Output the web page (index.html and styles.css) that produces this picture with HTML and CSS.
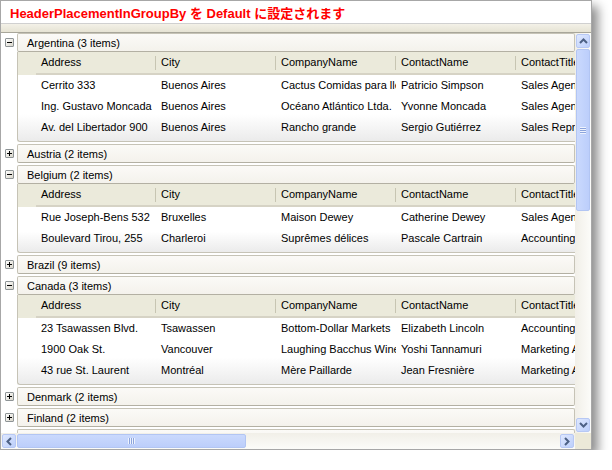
FILE: index.html
```html
<!DOCTYPE html>
<html lang="ja">
<head>
<meta charset="utf-8">
<title>HeaderPlacementInGroupBy</title>
<link rel="stylesheet" href="styles.css">
</head>
<body>
<div class="window">
  <div class="title">HeaderPlacementInGroupBy を Default に設定されます</div>
  <div class="grouppanel"></div>
  <div class="main">
    <div class="content">
      <div class="group">
        <div class="ghead"><span class="exp minus"></span><div class="gbox">Argentina (3 items)</div></div>
        <div class="gbody">
          <div class="hdr"><div class="hcell">Address</div><div class="hcell">City</div><div class="hcell">CompanyName</div><div class="hcell">ContactName</div><div class="hcell">ContactTitle</div></div>
          <div class="rows">
            <div class="row"><div class="cell">Cerrito 333</div><div class="cell">Buenos Aires</div><div class="cell">Cactus Comidas para llevar</div><div class="cell">Patricio Simpson</div><div class="cell">Sales Agent</div></div>
            <div class="row"><div class="cell">Ing. Gustavo Moncada</div><div class="cell">Buenos Aires</div><div class="cell">Océano Atlántico Ltda.</div><div class="cell">Yvonne Moncada</div><div class="cell">Sales Agent</div></div>
            <div class="row"><div class="cell">Av. del Libertador 900</div><div class="cell">Buenos Aires</div><div class="cell">Rancho grande</div><div class="cell">Sergio Gutiérrez</div><div class="cell">Sales Representative</div></div>
          </div>
        </div>
      </div>
      <div class="group">
        <div class="ghead"><span class="exp plus"></span><div class="gbox">Austria (2 items)</div></div>
      </div>
      <div class="group">
        <div class="ghead"><span class="exp minus"></span><div class="gbox">Belgium (2 items)</div></div>
        <div class="gbody">
          <div class="hdr"><div class="hcell">Address</div><div class="hcell">City</div><div class="hcell">CompanyName</div><div class="hcell">ContactName</div><div class="hcell">ContactTitle</div></div>
          <div class="rows">
            <div class="row"><div class="cell">Rue Joseph-Bens 532</div><div class="cell">Bruxelles</div><div class="cell">Maison Dewey</div><div class="cell">Catherine Dewey</div><div class="cell">Sales Agent</div></div>
            <div class="row"><div class="cell">Boulevard Tirou, 255</div><div class="cell">Charleroi</div><div class="cell">Suprêmes délices</div><div class="cell">Pascale Cartrain</div><div class="cell">Accounting Manager</div></div>
          </div>
        </div>
      </div>
      <div class="group">
        <div class="ghead"><span class="exp plus"></span><div class="gbox">Brazil (9 items)</div></div>
      </div>
      <div class="group">
        <div class="ghead"><span class="exp minus"></span><div class="gbox">Canada (3 items)</div></div>
        <div class="gbody">
          <div class="hdr"><div class="hcell">Address</div><div class="hcell">City</div><div class="hcell">CompanyName</div><div class="hcell">ContactName</div><div class="hcell">ContactTitle</div></div>
          <div class="rows">
            <div class="row"><div class="cell">23 Tsawassen Blvd.</div><div class="cell">Tsawassen</div><div class="cell">Bottom-Dollar Markets</div><div class="cell">Elizabeth Lincoln</div><div class="cell">Accounting Manager</div></div>
            <div class="row"><div class="cell">1900 Oak St.</div><div class="cell">Vancouver</div><div class="cell">Laughing Bacchus Wine Cellars</div><div class="cell">Yoshi Tannamuri</div><div class="cell">Marketing Assistant</div></div>
            <div class="row"><div class="cell">43 rue St. Laurent</div><div class="cell">Montréal</div><div class="cell">Mère Paillarde</div><div class="cell">Jean Fresnière</div><div class="cell">Marketing Assistant</div></div>
          </div>
        </div>
      </div>
      <div class="group">
        <div class="ghead"><span class="exp plus"></span><div class="gbox">Denmark (2 items)</div></div>
      </div>
      <div class="group">
        <div class="ghead"><span class="exp plus"></span><div class="gbox">Finland (2 items)</div></div>
      </div>
      <div class="group">
        <div class="ghead"><span class="exp plus"></span><div class="gbox">France (11 items)</div></div>
      </div>
    </div>
    <div class="vscroll">
      <div class="sbtn"><svg width="9" height="6" viewBox="0 0 9 6"><polyline points="1,5 4.5,1.5 8,5" fill="none" stroke="#4d6185" stroke-width="2"/></svg></div>
      <div class="vthumb"><span class="grip-h"></span></div>
      <div class="track"></div>
      <div class="sbtn"><svg width="9" height="6" viewBox="0 0 9 6"><polyline points="1,1 4.5,4.5 8,1" fill="none" stroke="#4d6185" stroke-width="2"/></svg></div>
    </div>
    <div class="hscroll">
      <div class="sbtn"><svg width="6" height="9" viewBox="0 0 6 9"><polyline points="5,1 1.5,4.5 5,8" fill="none" stroke="#4d6185" stroke-width="2"/></svg></div>
      <div class="hthumb"><span class="grip-v"></span></div>
      <div class="track"></div>
      <div class="sbtn"><svg width="6" height="9" viewBox="0 0 6 9"><polyline points="1,1 4.5,4.5 1,8" fill="none" stroke="#4d6185" stroke-width="2"/></svg></div>
    </div>
    <div class="corner"></div>
  </div>
</div>
</body>
</html>
```
FILE: styles.css
```css
html, body {
  margin: 0;
  padding: 0;
  background: #ffffff;
}

body {
  font-family: "Liberation Sans", Arial, sans-serif;
  font-size: 11px;
  color: #000;
}

.window {
  width: 590px;
  height: 448px;
  border: 1px solid #a7a7a7;
  display: flex;
  flex-direction: column;
  background: #fff;
  box-shadow: 6px 6px 10px rgba(0, 0, 0, 0.45);
}

.title {
  height: 22px;
  flex: none;
  display: flex;
  align-items: center;
  padding-left: 9px;
  font-family: "Liberation Sans", "Noto Sans CJK JP", sans-serif;
  font-weight: bold;
  font-size: 13px;
  color: #ff0000;
  border-bottom: 1px solid #d0d0d0;
}

.grouppanel {
  height: 8px;
  flex: none;
  background: linear-gradient(#f3f1e8, #e6e3d4);
  border-bottom: 1px solid #a8a69a;
}

.main {
  flex: 1;
  min-height: 0;
  display: grid;
  grid-template-columns: 1fr 16px;
  grid-template-rows: 1fr 16px;
}

.content {
  overflow: hidden;
  min-width: 0;
  min-height: 0;
}

.group {
  margin-bottom: 2px;
}

.ghead {
  display: flex;
  align-items: center;
  height: 19px;
}

.exp {
  flex: none;
  width: 7px;
  height: 7px;
  margin: 0 3px 0 4px;
  border: 1px solid #8e9496;
  border-radius: 1px;
  background: linear-gradient(135deg, #ffffff, #d8d5ca);
  position: relative;
}

.exp::before {
  content: "";
  position: absolute;
  left: 1px;
  top: 3px;
  width: 5px;
  height: 1px;
  background: #000;
}

.exp.plus::after {
  content: "";
  position: absolute;
  left: 3px;
  top: 1px;
  width: 1px;
  height: 5px;
  background: #000;
}

.gbox {
  flex: 1;
  height: 19px;
  box-sizing: border-box;
  border: 1px solid #c6c3b6;
  border-bottom-color: #b3b0a3;
  border-radius: 2px;
  background: linear-gradient(#fbfaf7, #f4f2ec);
  padding-left: 9px;
  line-height: 18px;
  white-space: nowrap;
}

.gbody {
  margin-left: 16px;
  border-left: 1px solid #c6c3b6;
  border-bottom: 1px solid #c6c3b6;
  border-bottom-left-radius: 3px;
  background: linear-gradient(#ffffff 70%, #ebebeb);
  padding-bottom: 3px;
}

.hdr {
  display: flex;
  height: 23px;
  background: #ebeadb;
  padding-left: 18px;
  white-space: nowrap;
}

.hcell {
  flex: none;
  width: 120px;
  box-sizing: border-box;
  padding-left: 5px;
  line-height: 21px;
  border-bottom: 2px solid #d6d3c5;
  position: relative;
  overflow: hidden;
}

.hcell::after {
  content: "";
  position: absolute;
  right: 0;
  top: 4px;
  width: 1px;
  height: 14px;
  background: #c7c5b2;
  box-shadow: 1px 0 0 #fff;
}

.row {
  display: flex;
  height: 21px;
  padding-left: 18px;
  white-space: nowrap;
}

.cell {
  flex: none;
  width: 120px;
  box-sizing: border-box;
  padding-left: 5px;
  line-height: 21px;
  overflow: hidden;
  text-overflow: clip;
}

.vscroll {
  display: flex;
  flex-direction: column;
  background: linear-gradient(to right, #f1efe8, #fcfcf9);
}

.hscroll {
  display: flex;
  flex-direction: row;
  background: linear-gradient(#f1efe8, #fcfcf9);
}

.sbtn {
  flex: none;
  width: 14px;
  height: 14px;
  margin: 1px;
  box-sizing: border-box;
  border: 1px solid #b7c8f4;
  border-radius: 2px;
  background: linear-gradient(135deg, #dfe8fe, #bccffb);
  display: flex;
  align-items: center;
  justify-content: center;
}

.vthumb {
  flex: none;
  height: 162px;
  margin: 0 1px;
  box-sizing: border-box;
  border: 1px solid #b2c5f3;
  border-radius: 2px;
  background: linear-gradient(to right, #cad9fd, #bccefb);
  display: flex;
  align-items: center;
  justify-content: center;
}

.hthumb {
  flex: none;
  width: 229px;
  margin: 1px 0;
  box-sizing: border-box;
  border: 1px solid #b2c5f3;
  border-radius: 2px;
  background: linear-gradient(#cad9fd, #bccefb);
  display: flex;
  align-items: center;
  justify-content: center;
}

.grip-h {
  width: 6px;
  height: 7px;
  background: repeating-linear-gradient(#eef3fe 0 1px, #8ca4dc 1px 2px);
}

.grip-v {
  width: 7px;
  height: 6px;
  background: repeating-linear-gradient(to right, #eef3fe 0 1px, #8ca4dc 1px 2px);
}

.track {
  flex: 1;
}

.corner {
  background: #ece9d8;
}
```
